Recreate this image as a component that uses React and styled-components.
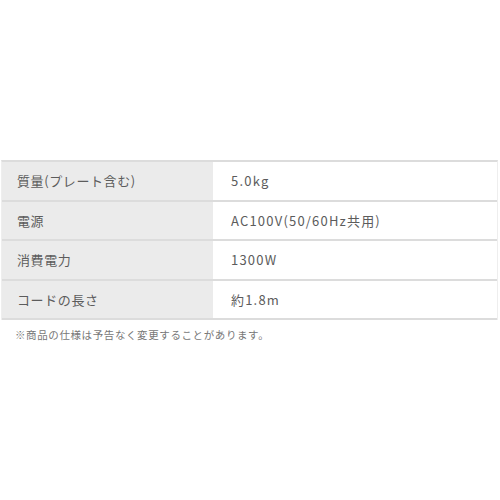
import React from 'react'
import styled, { createGlobalStyle } from 'styled-components'

const GlobalStyle = createGlobalStyle`
  body {
    margin: 0;
    background: #fff;
    font-family: "Noto Sans CJK JP", "Noto Sans", sans-serif;
  }
`

const Wrapper = styled.div`
  width: 500px;
  height: 500px;
  padding-top: 160px;
  box-sizing: border-box;
`

const Table = styled.div`
  border-top: 2px solid #dcdcdc;
  border-left: 1px solid #eeeeee;
  border-right: 1px solid #eeeeee;
  margin: 0 2px 0 1px;
`

const Row = styled.div`
  display: grid;
  grid-template-columns: 211px 1fr;
  height: 37.5px;
  border-bottom: 2px solid #dcdcdc;
`

const Label = styled.div`
  background: #ebebeb;
  display: flex;
  align-items: center;
  padding-left: 15px;
  font-size: 13px;
  color: #5c5c5c;
  letter-spacing: 0.6px;
`

const Value = styled.div`
  display: flex;
  align-items: center;
  padding-left: 18px;
  font-size: 13px;
  color: #5c5c5c;
  letter-spacing: 1.2px;
`

const Note = styled.p`
  margin: 7px 0 0 15px;
  font-size: 10.5px;
  color: #777;
  letter-spacing: 0.6px;
`

const specs = [
  ['質量(プレート含む)', '5.0kg'],
  ['電源', 'AC100V(50/60Hz共用)'],
  ['消費電力', '1300W'],
  ['コードの長さ', '約1.8m'],
]

const App = () => {
  return (
    <Wrapper>
      <GlobalStyle />
      <Table>
        {specs.map(([k, v]) => (
          <Row key={k}>
            <Label>{k}</Label>
            <Value>{v}</Value>
          </Row>
        ))}
      </Table>
      <Note>※商品の仕様は予告なく変更することがあります。</Note>
    </Wrapper>
  )
}
export default App
